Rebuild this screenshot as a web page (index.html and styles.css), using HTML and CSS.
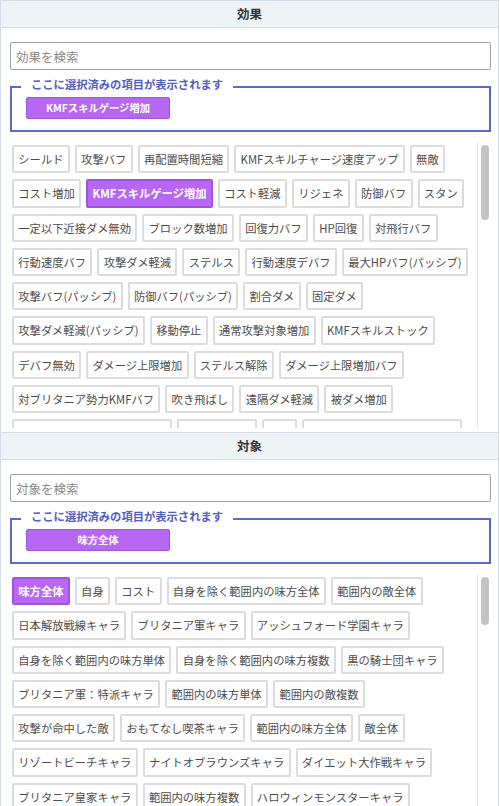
FILE: index.html
```html
<!DOCTYPE html>
<html lang="ja">
<head>
    <meta charset="UTF-8">
    <meta name="viewport" content="width=device-width, initial-scale=1.0">
    <title>効果・対象フィルター</title>
    <link rel="stylesheet" href="styles.css">
</head>
<body>
    <!-- 効果 -->
    <div class="panel">
        <div class="panel-header">効果</div>
        <div class="panel-body">
            <input class="search" type="text" placeholder="効果を検索">
            <fieldset class="selected-box">
                <legend>ここに選択済みの項目が表示されます</legend>
                <div class="chip">KMFスキルゲージ増加</div>
            </fieldset>
            <div class="tag-wrap">
                <div class="tag-list">
                    <span class="tag">シールド</span>
                    <span class="tag">攻撃バフ</span>
                    <span class="tag">再配置時間短縮</span>
                    <span class="tag">KMFスキルチャージ速度アップ</span>
                    <span class="tag">無敵</span>
                    <span class="tag">コスト増加</span>
                    <span class="tag active">KMFスキルゲージ増加</span>
                    <span class="tag">コスト軽減</span>
                    <span class="tag">リジェネ</span>
                    <span class="tag">防御バフ</span>
                    <span class="tag">スタン</span>
                    <span class="tag">一定以下近接ダメ無効</span>
                    <span class="tag">ブロック数増加</span>
                    <span class="tag">回復力バフ</span>
                    <span class="tag">HP回復</span>
                    <span class="tag">対飛行バフ</span>
                    <span class="tag">行動速度バフ</span>
                    <span class="tag">攻撃ダメ軽減</span>
                    <span class="tag">ステルス</span>
                    <span class="tag">行動速度デバフ</span>
                    <span class="tag">最大HPバフ(パッシブ)</span>
                    <span class="tag">攻撃バフ(パッシブ)</span>
                    <span class="tag">防御バフ(パッシブ)</span>
                    <span class="tag">割合ダメ</span>
                    <span class="tag">固定ダメ</span>
                    <span class="tag">攻撃ダメ軽減(パッシブ)</span>
                    <span class="tag">移動停止</span>
                    <span class="tag">通常攻撃対象増加</span>
                    <span class="tag">KMFスキルストック</span>
                    <span class="tag">デバフ無効</span>
                    <span class="tag">ダメージ上限増加</span>
                    <span class="tag">ステルス解除</span>
                    <span class="tag">ダメージ上限増加バフ</span>
                    <span class="tag">対ブリタニア勢力KMFバフ</span>
                    <span class="tag">吹き飛ばし</span>
                    <span class="tag">遠隔ダメ軽減</span>
                    <span class="tag">被ダメ増加</span>
                    <span class="tag">対日本解放戦線勢力KMFバフ</span>
                    <span class="tag">被回復量増加</span>
                    <span class="tag">沈黙</span>
                    <span class="tag">KMFスキルゲージ上限アップ</span>
                    <span class="tag">挑発</span>
                    <span class="tag">回避</span>
                    <span class="tag">燃焼</span>
                    <span class="tag">凍結</span>
                    <span class="tag">気絶無効</span>
                    <span class="tag">デバフ解除</span>
                    <span class="tag">バフ解除</span>
                    <span class="tag">射程増加</span>
                    <span class="tag">射程減少</span>
                    <span class="tag">移動速度バフ</span>
                    <span class="tag">移動速度デバフ</span>
                    <span class="tag">攻撃デバフ</span>
                    <span class="tag">防御デバフ</span>
                    <span class="tag">回復力デバフ</span>
                    <span class="tag">与ダメ増加</span>
                    <span class="tag">HP吸収</span>
                    <span class="tag">反射</span>
                    <span class="tag">蘇生</span>
                    <span class="tag">KMFスキルゲージ減少</span>
                    <span class="tag">継続ダメ</span>
                    <span class="tag">即死</span>
                    <span class="tag">貫通ダメ</span>
                    <span class="tag">範囲ダメ</span>
                    <span class="tag">ブロック数減少</span>
                    <span class="tag">コスト回復速度アップ</span>
                    <span class="tag">再配置時間延長</span>
                    <span class="tag">スキル封印</span>
                    <span class="tag">行動不能</span>
                    <span class="tag">対地上バフ</span>
                    <span class="tag">対飛行デバフ</span>
                    <span class="tag">対黒の騎士団勢力KMFバフ</span>
                    <span class="tag">会心率アップ</span>
                    <span class="tag">会心ダメアップ</span>
                    <span class="tag">攻撃速度バフ</span>
                    <span class="tag">攻撃速度デバフ</span>
                    <span class="tag">最大HPデバフ</span>
                    <span class="tag">回復量増加(パッシブ)</span>
                    <span class="tag">被ダメ軽減(パッシブ)</span>
                    <span class="tag">状態異常耐性</span>
                </div>
                <div class="scrollbar"><div class="scrollbar-thumb"></div></div>
            </div>
        </div>
    </div>

    <!-- 対象 -->
    <div class="panel">
        <div class="panel-header">対象</div>
        <div class="panel-body">
            <input class="search" type="text" placeholder="対象を検索">
            <fieldset class="selected-box">
                <legend>ここに選択済みの項目が表示されます</legend>
                <div class="chip">味方全体</div>
            </fieldset>
            <div class="tag-wrap">
                <div class="tag-list">
                    <span class="tag active">味方全体</span>
                    <span class="tag">自身</span>
                    <span class="tag">コスト</span>
                    <span class="tag">自身を除く範囲内の味方全体</span>
                    <span class="tag">範囲内の敵全体</span>
                    <span class="tag">日本解放戦線キャラ</span>
                    <span class="tag">ブリタニア軍キャラ</span>
                    <span class="tag">アッシュフォード学園キャラ</span>
                    <span class="tag">自身を除く範囲内の味方単体</span>
                    <span class="tag">自身を除く範囲内の味方複数</span>
                    <span class="tag">黒の騎士団キャラ</span>
                    <span class="tag">ブリタニア軍：特派キャラ</span>
                    <span class="tag">範囲内の味方単体</span>
                    <span class="tag">範囲内の敵複数</span>
                    <span class="tag">攻撃が命中した敵</span>
                    <span class="tag">おもてなし喫茶キャラ</span>
                    <span class="tag">範囲内の味方全体</span>
                    <span class="tag">敵全体</span>
                    <span class="tag">リゾートビーチキャラ</span>
                    <span class="tag">ナイトオブラウンズキャラ</span>
                    <span class="tag">ダイエット大作戦キャラ</span>
                    <span class="tag">ブリタニア皇家キャラ</span>
                    <span class="tag">範囲内の味方複数</span>
                    <span class="tag">ハロウィンモンスターキャラ</span>
                    <span class="tag">範囲内の敵単体</span>
                    <span class="tag">攻撃対象の敵</span>
                    <span class="tag">自身をブロックしている敵</span>
                    <span class="tag">飛行ユニット</span>
                    <span class="tag">地上ユニット</span>
                </div>
                <div class="scrollbar"><div class="scrollbar-thumb short"></div></div>
            </div>
        </div>
    </div>
</body>
</html>
```

FILE: styles.css
```css
html, body {
    margin: 0;
    height: 806px;
    overflow: hidden;
}
body {
    font-family: "Noto Sans CJK JP", "Noto Sans", sans-serif;
    background-color: #ffffff;
    color: #333333;
}

.panel {
    width: 499px;
    box-sizing: border-box;
    border: 1px solid #d3dde6;
    border-bottom: none;
}
.panel-header {
    height: 26px;
    line-height: 26px;
    text-align: center;
    font-size: 12.5px;
    font-weight: bold;
    color: #333333;
    background-color: #eef4f6;
    border-bottom: 1px solid #d3dde6;
}
.panel-body {
    padding: 14px 7px 4px 9px;
}

/* 検索ボックス */
.search {
    display: block;
    width: 100%;
    height: 28px;
    box-sizing: border-box;
    margin: 0;
    padding: 0 5px;
    border: 1px solid #a3a3a3;
    border-radius: 2px;
    font-family: inherit;
    font-size: 12.5px;
    color: #333333;
    outline: none;
}
.search::placeholder {
    color: #8a8a8a;
}

/* 選択済みエリア */
.selected-box {
    margin: 6px 0 0;
    padding: 0 14px 11px;
    border: 2px solid #5b69c9;
    min-width: 0;
}
.selected-box legend {
    margin-left: -5px;
    padding: 0 10px 5px;
    line-height: 16px;
    font-size: 11.3px;
    font-weight: bold;
    color: #5060c6;
}
.chip {
    width: 144px;
    height: 22px;
    box-sizing: border-box;
    line-height: 20px;
    text-align: center;
    font-size: 10.3px;
    font-weight: bold;
    color: #ffffff;
    background-color: #b767f4;
    border: 1px solid #a252e2;
    border-radius: 2px;
}

/* タグ一覧 */
.tag-wrap {
    position: relative;
    margin-top: 10px;
}
.tag-list {
    height: 286px;
    box-sizing: border-box;
    padding: 3px 20px 3px 2px;
    overflow: hidden;
    display: flex;
    flex-wrap: wrap;
    align-content: flex-start;
    gap: 6px 5px;
}
.tag {
    padding: 2px 4.3px;
    line-height: 20.3px;
    font-size: 11.3px;
    color: #4d4d4d;
    white-space: nowrap;
    background-color: #ffffff;
    border: 2px solid #dcdcdc;
    border-radius: 2px;
    cursor: pointer;
}
.tag.active {
    color: #ffffff;
    font-weight: bold;
    background-color: #b767f4;
    border-color: #a252e2;
}

/* スクロールバー */
.scrollbar {
    position: absolute;
    top: 0;
    right: 0;
    bottom: 0;
    width: 13px;
    background-color: #ffffff;
    border-left: 1px solid #e8e8e8;
}
.scrollbar-thumb {
    margin: 3px 2px 0 3px;
    height: 75px;
    border-radius: 4px;
    background-color: #c4c4c4;
}
.scrollbar-thumb.short {
    height: 48px;
}
```
